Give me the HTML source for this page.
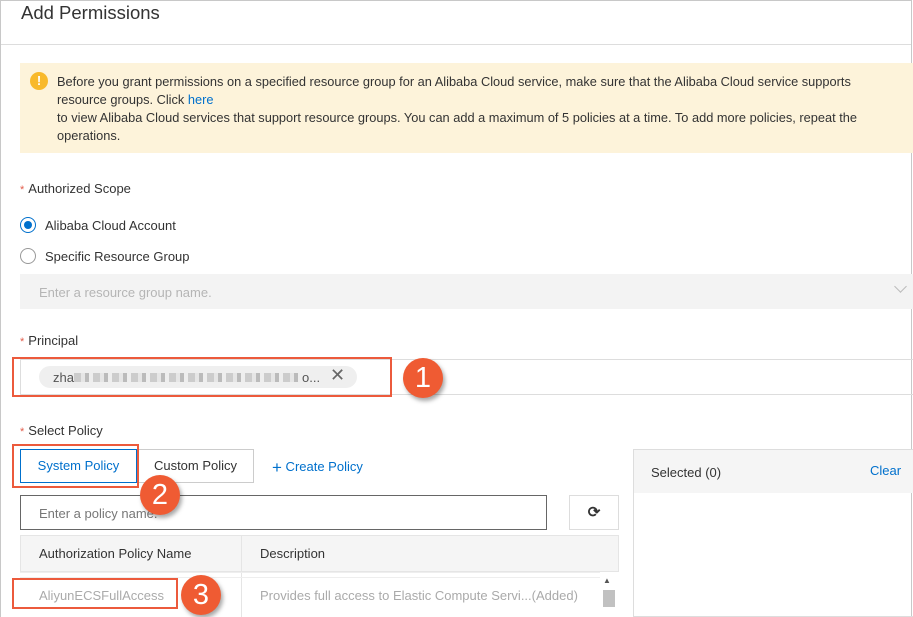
<!DOCTYPE html>
<html><head><style>
*{box-sizing:border-box;margin:0;padding:0}
body{width:913px;height:617px;overflow:hidden;background:#fff;font-family:"Liberation Sans",sans-serif;color:#333;position:relative;font-size:13px}
.a{position:absolute}
.badge{position:absolute;width:40px;height:40px;border-radius:50%;background:#ef5b33;color:#fff;font-size:29px;text-align:center;line-height:40px;box-shadow:2px 3px 4px rgba(0,0,0,.35)}
.red{position:absolute;border:2.5px solid #ec5a3c}
.lbl{position:absolute;left:20px;font-size:13px;color:#333}
.lbl b{color:#e25c4a;font-weight:normal;font-size:11px;margin-right:4px}
</style></head><body>
<div class="a" style="left:0;top:0;width:912px;height:617px;border-left:1px solid #c8c8c8;border-right:1px solid #c8c8c8;border-top:1px solid #c8c8c8"></div>
<div class="a" style="left:21px;top:2px;font-size:18.5px;color:#333">Add Permissions</div>
<div class="a" style="left:1px;top:44px;width:910px;height:1px;background:#ddd"></div>
<div class="a" style="left:20px;top:63px;width:893px;height:90px;background:#fdf3da"></div>
<div class="a" style="left:30px;top:72px;width:18px;height:18px;border-radius:50%;background:#f8b92b;color:#fff;font-weight:bold;text-align:center;line-height:18px;font-size:13px">!</div>
<div class="a" style="left:57px;top:73px;width:835px;line-height:18px;font-size:12.8px;color:#333">Before you grant permissions on a specified resource group for an Alibaba Cloud service, make sure that the Alibaba Cloud service supports resource groups. Click <span style="color:#0070cc">here</span><br>to view Alibaba Cloud services that support resource groups. You can add a maximum of 5 policies at a time. To add more policies, repeat the operations.</div>
<div class="lbl" style="top:181px"><b>*</b>Authorized Scope</div>
<div class="a" style="left:20px;top:217px;width:16px;height:16px;border-radius:50%;border:1.5px solid #0070cc"><div style="margin:2.5px;width:8px;height:8px;border-radius:50%;background:#0070cc"></div></div>
<div class="a" style="left:45px;top:218px">Alibaba Cloud Account</div>
<div class="a" style="left:20px;top:248px;width:16px;height:16px;border-radius:50%;border:1px solid #999"></div>
<div class="a" style="left:45px;top:249px">Specific Resource Group</div>
<div class="a" style="left:20px;top:274px;width:893px;height:35px;background:#f3f3f3"></div>
<div class="a" style="left:39px;top:285px;color:#b5b5b5">Enter a resource group name.</div>
<div class="a" style="left:896px;top:282px;width:9px;height:9px;border-right:1px solid #bbb;border-bottom:1px solid #bbb;transform:rotate(45deg)"></div>
<div class="lbl" style="top:333px"><b>*</b>Principal</div>
<div class="a" style="left:20px;top:359px;width:893px;height:36px;border:1px solid #ddd;border-right:none"></div>
<div class="a" style="left:39px;top:366px;width:318px;height:22px;border-radius:11px;background:#efefef"></div>
<div class="a" style="left:53px;top:370px;color:#555">zha</div>
<div class="a" style="left:74px;top:373px;width:228px;height:9px;background:repeating-linear-gradient(90deg,#ccc 0 7px,#e6e6e6 7px 11px,#bbb 11px 15px,#eee 15px 19px)"></div>
<div class="a" style="left:302px;top:370px;color:#555">o...</div>
<div class="a" style="left:330px;top:365px;font-size:18px;color:#666">✕</div>
<div class="red" style="left:12px;top:357px;width:380px;height:40px"></div>
<div class="badge" style="left:403px;top:358px">1</div>
<div class="lbl" style="top:423px"><b>*</b>Select Policy</div>
<div class="a" style="left:20px;top:449px;width:117px;height:34px;border:1px solid #0070cc;color:#0070cc;text-align:center;line-height:32px">System Policy</div>
<div class="a" style="left:137px;top:449px;width:117px;height:34px;border:1px solid #ccc;text-align:center;line-height:32px">Custom Policy</div>
<div class="a" style="left:272px;top:458px;color:#0070cc"><span style="font-size:17px;vertical-align:-2px">+</span> Create Policy</div>
<div class="a" style="left:20px;top:495px;width:527px;height:35px;border:1px solid #666"></div>
<div class="a" style="left:39px;top:506px;color:#777">Enter a policy name.</div>
<div class="a" style="left:569px;top:495px;width:50px;height:35px;border:1px solid #ddd;text-align:center;line-height:33px;font-size:15px;color:#333;font-weight:bold">⟳</div>
<div class="a" style="left:20px;top:535px;width:599px;height:37px;background:#f5f5f5;border:1px solid #e5e5e5"></div>
<div class="a" style="left:241px;top:535px;width:1px;height:82px;background:#e5e5e5"></div>
<div class="a" style="left:39px;top:546px">Authorization Policy Name</div>
<div class="a" style="left:260px;top:546px">Description</div>
<div class="a" style="left:20px;top:572px;width:580px;height:45px;border-top:1px solid #eee"></div>
<div class="a" style="left:20px;top:577px;width:580px;height:1px;background:#eee"></div>
<div class="a" style="left:39px;top:588px;color:#aaa">AliyunECSFullAccess</div>
<div class="a" style="left:260px;top:588px;color:#aaa">Provides full access to Elastic Compute Servi...(Added)</div>
<div class="a" style="left:603px;top:576px;font-size:8px;color:#555">▲</div>
<div class="a" style="left:603px;top:590px;width:12px;height:17px;background:#c1c1c1"></div>
<div class="red" style="left:12px;top:578px;width:166px;height:31px"></div>
<div class="badge" style="left:181px;top:575px">3</div>
<div class="red" style="left:12px;top:444px;width:127px;height:44px"></div>
<div class="badge" style="left:140px;top:475px">2</div>
<div class="a" style="left:633px;top:449px;width:280px;height:168px;border:1px solid #ddd;border-right:none"></div>
<div class="a" style="left:634px;top:450px;width:279px;height:43px;background:#f5f5f5"></div>
<div class="a" style="left:651px;top:465px">Selected (0)</div>
<div class="a" style="left:870px;top:463px;color:#0070cc">Clear</div>
</body></html>
